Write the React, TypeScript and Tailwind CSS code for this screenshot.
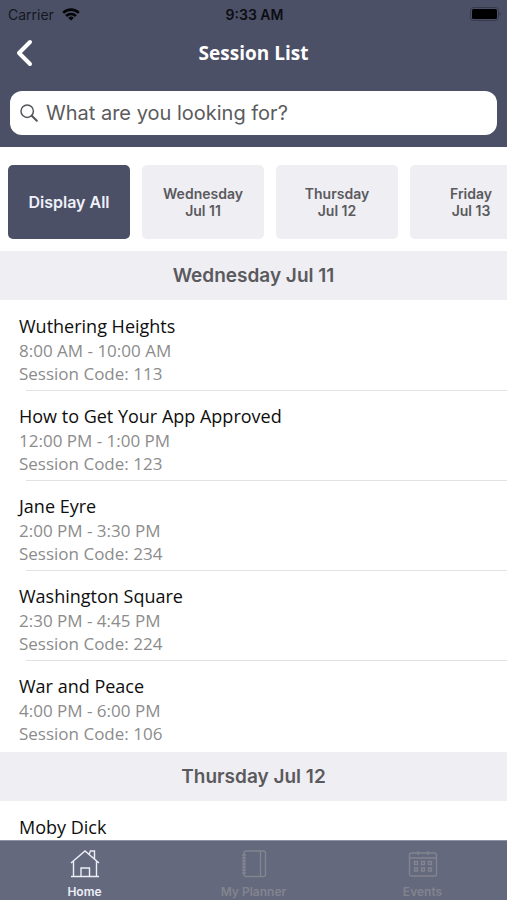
import type { ReactNode } from "react";

type Session = { title: string; time: string; code: string };
type Day = { label: string; sessions: Session[] };

const days: Day[] = [
  {
    label: "Wednesday Jul 11",
    sessions: [
      { title: "Wuthering Heights", time: "8:00 AM - 10:00 AM", code: "113" },
      { title: "How to Get Your App Approved", time: "12:00 PM - 1:00 PM", code: "123" },
      { title: "Jane Eyre", time: "2:00 PM - 3:30 PM", code: "234" },
      { title: "Washington Square", time: "2:30 PM - 4:45 PM", code: "224" },
      { title: "War and Peace", time: "4:00 PM - 6:00 PM", code: "106" },
    ],
  },
  {
    label: "Thursday Jul 12",
    sessions: [{ title: "Moby Dick", time: "", code: "" }],
  },
];

const filters = [
  { day: "Wednesday", date: "Jul 11" },
  { day: "Thursday", date: "Jul 12" },
  { day: "Friday", date: "Jul 13" },
];

function StatusBar() {
  return (
    <div className="grid h-7 grid-cols-3 items-center pl-2 pr-1.5 text-[14px] text-[#0c0d12]">
      <div className="flex items-center gap-2">
        <span className="text-[#15171f]">Carrier</span>
        <svg width="18" height="13" viewBox="0 0 18 13" fill="none" stroke="#050507" strokeWidth="2.6" aria-hidden="true">
          <path d="M1.2 4.9a11 11 0 0 1 15.6 0" />
          <path d="M4.1 8a6.9 6.9 0 0 1 9.8 0" />
          <path d="M9 12.6 6.2 9.9a4 4 0 0 1 5.6 0z" fill="#050507" stroke="none" />
        </svg>
      </div>
      <span className="text-center font-semibold">9:33 AM</span>
      <svg className="justify-self-end" width="31" height="14" viewBox="0 0 31 14" aria-hidden="true">
        <rect x="0.5" y="0.5" width="28" height="13" rx="3" fill="none" stroke="#373a4b" />
        <rect x="2" y="2" width="25" height="10" rx="1.5" fill="#000" />
        <path d="M29.5 5v4c1.6-.5 1.6-3.5 0-4z" fill="#373a4b" />
      </svg>
    </div>
  );
}

function Header() {
  return (
    <header className="shrink-0 bg-[#4b5066] pb-3">
      <StatusBar />
      <div className="grid h-[50px] grid-cols-3 items-center px-4">
        <button type="button" aria-label="Back" className="justify-self-start">
          <svg width="17" height="28" viewBox="0 0 17 28" fill="none" stroke="#fff" strokeWidth="4" strokeLinecap="round" strokeLinejoin="round" aria-hidden="true">
            <path d="M14 3 3 14l11 11" />
          </svg>
        </button>
        <h1 className="text-center font-['Open_Sans',sans-serif] text-[19px] font-bold whitespace-nowrap text-white">Session List</h1>
      </div>
      <label className="mx-[10px] mt-[13px] flex h-11 items-center gap-2 rounded-xl bg-white pl-2.5">
        <svg className="shrink-0" width="18" height="18" viewBox="0 0 18 18" fill="none" stroke="#54555a" strokeWidth="1.5" strokeLinecap="round" aria-hidden="true">
          <circle cx="7.2" cy="7.2" r="6.2" />
          <path d="m11.8 11.8 5 5" strokeWidth="2" />
        </svg>
        <input
          type="search"
          aria-label="Search sessions"
          placeholder="What are you looking for?"
          className="min-w-0 flex-1 bg-transparent text-[20px] outline-none placeholder:text-[#5b5b5d]"
        />
      </label>
    </header>
  );
}

function Filters() {
  return (
    <div className="flex shrink-0 gap-3 overflow-hidden px-2 pt-[18px] pb-3">
      <button type="button" className="h-[74px] w-[122px] shrink-0 rounded-[5px] bg-[#4b5066] text-[16px] font-semibold text-[#eff0fa]">
        Display All
      </button>
      {filters.map((f) => (
        <button key={f.day} type="button" className="h-[74px] w-[122px] shrink-0 rounded-[5px] bg-[#efeef3] text-[14px] leading-[17px] font-semibold text-[#5a5a5e]">
          {f.day}
          <br />
          {f.date}
        </button>
      ))}
    </div>
  );
}

function SessionRow({ session }: { session: Session }) {
  return (
    <li className="group flex h-[90px] flex-col font-['Open_Sans',sans-serif]">
      <div className="flex-1 pt-3 pl-[19px]">
        <h3 className="text-[18px] leading-[26px] text-[#0e0e0e]">{session.title}</h3>
        {session.time && (
          <>
            <p className="text-[17px] leading-[23px] text-[#8c8c8c]">{session.time}</p>
            <p className="text-[17px] leading-[23px] text-[#8c8c8c]">Session Code: {session.code}</p>
          </>
        )}
      </div>
      <div className="ml-[26px] h-px bg-[#e2e2e4] group-last:invisible" />
    </li>
  );
}

function Tab({ label, active, children }: { label: string; active?: boolean; children: ReactNode }) {
  return (
    <a href="#" className={`flex flex-col items-center gap-[5px] pt-2 text-[12px] font-semibold ${active ? "text-[#eceef8]" : "text-[#82848f]"}`}>
      <svg width="30" height="30" viewBox="0 0 30 30" fill="none" stroke="currentColor" strokeWidth="1.4" aria-hidden="true">
        {children}
      </svg>
      <span className="leading-4">{label}</span>
    </a>
  );
}

export default function App() {
  return (
    <div className="flex h-screen flex-col overflow-hidden bg-white font-['Inter',sans-serif]">
      <Header />
      <Filters />
      <main className="min-h-0 flex-1 overflow-hidden">
        {days.map((d) => (
          <section key={d.label}>
            <h2 className="flex h-[49px] items-center justify-center bg-[#efeef3] pt-0.5 text-[19px] font-semibold text-[#5a5a5e]">{d.label}</h2>
            <ul className="py-px">
              {d.sessions.map((s) => (
                <SessionRow key={s.title} session={s} />
              ))}
            </ul>
          </section>
        ))}
      </main>
      <nav className="grid h-[60px] shrink-0 grid-cols-3 overflow-hidden border-t border-[#8f92a2] bg-[#65697d]">
        <Tab label="Home" active>
          <path d="M1 14 15 2l14 12M3.5 12v15.5M26.5 12v15.5M1 27.500h28M11 27.500v-8.500h8.500v8.500M19 5.500l1.500-3.500h4v8" />
        </Tab>
        <Tab label="My Planner">
          <rect x="5" y="2" width="21.5" height="25.5" rx="2" />
          <path d="M21.500 2v25.500M3 6h4M3 9h4M3 12h4M3 15h4M3 18h4M3 21h4M3 24h4" />
        </Tab>
        <Tab label="Events">
          <rect x="1.5" y="4" width="27" height="23" rx="2" />
          <path d="M1.500 9h27M10 2v4M20 2v4" />
          <path d="M6.500 12.500h3v3h-3zM13.500 12.500h3v3h-3zM20.500 12.500h3v3h-3zM6.500 19h3v3h-3zM13.500 19h3v3h-3zM20.500 19h3v3h-3z" />
        </Tab>
      </nav>
    </div>
  );
}
